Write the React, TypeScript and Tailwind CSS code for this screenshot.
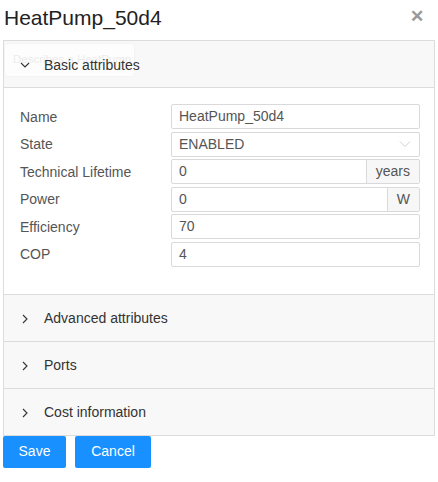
import React from 'react';

const font = { fontFamily: '"Liberation Sans", Arial, sans-serif' };

const Chevron = ({ open }: { open: boolean }) => (
  <svg width="10" height="10" viewBox="0 0 10 10" className="text-[#333]">
    {open ? (
      <path d="M1 3 L5 7 L9 3" fill="none" stroke="currentColor" strokeWidth="1.1" />
    ) : (
      <path d="M3 1 L7 5 L3 9" fill="none" stroke="currentColor" strokeWidth="1.1" />
    )}
  </svg>
);

const PanelHeader = ({ title, open }: { title: string; open?: boolean }) => (
  <div className="relative flex h-[46px] items-center pl-[16px] pt-[2px] text-[14px] text-[#333]">
    <Chevron open={!!open} />
    <span className="ml-[14px]">{title}</span>
  </div>
);

const Field = ({ value, unit, select }: { value: string; unit?: string; select?: boolean }) => (
  <div className="flex h-[25px] w-[249px] items-stretch rounded-[2px] border border-[#d9d9d9] bg-white text-[14px] text-[#555]">
    <div className="flex flex-1 items-center px-[7px]">{value}</div>
    {select && (
      <div className="flex items-center pr-[8px]">
        <svg width="12" height="8" viewBox="0 0 12 8">
          <path d="M1 1.5 L6 6.5 L11 1.5" fill="none" stroke="#cfcfcf" strokeWidth="1" />
        </svg>
      </div>
    )}
    {unit && (
      <div className="flex items-center border-l border-[#d9d9d9] bg-[#f7f7f7] px-[9px] text-[#555]">{unit}</div>
    )}
  </div>
);

const rows = [
  { label: 'Name', value: 'HeatPump_50d4' },
  { label: 'State', value: 'ENABLED', select: true },
  { label: 'Technical Lifetime', value: '0', unit: 'years' },
  { label: 'Power', value: '0', unit: 'W' },
  { label: 'Efficiency', value: '70' },
  { label: 'COP', value: '4' },
];

export default function App() {
  return (
    <div className="relative h-[482px] w-[438px] bg-white" style={font}>
      <div className="flex h-[40px] items-start justify-between pl-[4px] pr-[14px] pt-[3px]">
        <h1 className="text-[21px] leading-[30px] text-[#222]">HeatPump_50d4</h1>
        <span className="mt-[4px] text-[17px] font-bold leading-[20px] text-[#999]">✕</span>
      </div>

      <div className="mx-[3px] border border-[#dcdcdc] bg-[#f8f8f8]">
        <div className="relative">
          {/* fading tooltip behind the header label */}
          <div className="absolute left-[1px] top-[3px] flex h-[32px] w-[129px] items-center whitespace-nowrap rounded-[3px] bg-white/70 pl-[8px] text-[11.5px] text-[#ebebeb] shadow-[0_0_3px_rgba(0,0,0,0.05)]">
            Describes a HeatPump
          </div>
          <PanelHeader title="Basic attributes" open />
        </div>
        <div className="flex flex-col gap-[2.6px] border-t border-[#dcdcdc] bg-white pb-[27px] pl-[16px] pt-[16px]">
          {rows.map((r) => (
            <div key={r.label} className="flex h-[25px] items-center">
              <span className="w-[151px] pt-[1px] text-[14px] text-[#555]">{r.label}</span>
              <Field value={r.value} unit={r.unit} select={r.select} />
            </div>
          ))}
        </div>
        {['Advanced attributes', 'Ports', 'Cost information'].map((t) => (
          <div key={t} className="border-t border-[#dcdcdc]">
            <PanelHeader title={t} />
          </div>
        ))}
      </div>

      <div className="flex gap-[9px] pl-[3px]">
        <button className="h-[32px] w-[63px] rounded-[2px] bg-[#1890ff] text-[14px] text-white">Save</button>
        <button className="h-[32px] w-[76px] rounded-[2px] bg-[#1890ff] text-[14px] text-white">Cancel</button>
      </div>
    </div>
  );
}
